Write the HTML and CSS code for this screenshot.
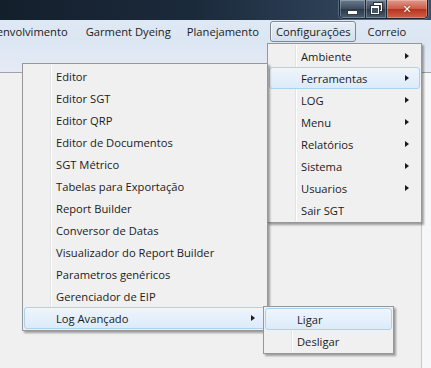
FILE: index.html
```html
<!DOCTYPE html>
<html lang="pt">
<head>
  <meta charset="UTF-8" />
  <title>SGT</title>
  <link rel="stylesheet" href="styles.css">
</head>
<body>
  <div class="janela">
    <div class="titulo">
      <div class="botoes">
        <div class="btn minimizar"><span class="traco"></span></div>
        <div class="btn restaurar"><span class="quad q1"></span><span class="quad q2"></span></div>
        <div class="btn fechar">&#x2715;</div>
      </div>
    </div>

    <div class="faixa">
      <div class="menubar">
        <div class="mb-item primeiro">Desenvolvimento</div>
        <div class="mb-item">Garment Dyeing</div>
        <div class="mb-item">Planejamento</div>
        <div class="mb-item aberto">Configurações</div>
        <div class="mb-item">Correio</div>
      </div>
    </div>

    <div class="cliente">
      <div class="moldura"></div>
    </div>

    <!-- menu Configurações -->
    <div class="menu menu-config">
      <div class="item">Ambiente<span class="seta"></span></div>
      <div class="item ativo">Ferramentas<span class="seta"></span></div>
      <div class="item">LOG<span class="seta"></span></div>
      <div class="item">Menu<span class="seta"></span></div>
      <div class="item">Relatórios<span class="seta"></span></div>
      <div class="item">Sistema<span class="seta"></span></div>
      <div class="item">Usuarios<span class="seta"></span></div>
      <div class="item">Sair SGT</div>
    </div>

    <!-- submenu Ferramentas -->
    <div class="menu menu-ferramentas">
      <div class="item">Editor</div>
      <div class="item">Editor SGT</div>
      <div class="item">Editor QRP</div>
      <div class="item">Editor de Documentos</div>
      <div class="item">SGT Métrico</div>
      <div class="item">Tabelas para Exportação</div>
      <div class="item">Report Builder</div>
      <div class="item">Conversor de Datas</div>
      <div class="item">Visualizador do Report Builder</div>
      <div class="item">Parametros genéricos</div>
      <div class="item">Gerenciador de EIP</div>
      <div class="item ativo">Log Avançado<span class="seta"></span></div>
    </div>

    <!-- submenu Log Avançado -->
    <div class="menu menu-log">
      <div class="item ativo">Ligar</div>
      <div class="item">Desligar</div>
    </div>
  </div>
</body>
</html>
```

FILE: styles.css
```css
body {
  margin: 0;
  font-family: "Open Sans", "Noto Sans", sans-serif;
  font-size: 11.2px;
  color: #1b1b1b;
  background: #f0f0f0;
}

.janela {
  position: relative;
  width: 431px;
  height: 368px;
  overflow: hidden;
  display: flex;
  flex-direction: column;
}

/* barra de titulo escura (Aero) */
.titulo {
  height: 20px;
  flex: none;
  background: linear-gradient(to right, #141f2c 0%, #1b2a3b 45%, #2c3f55 75%, #3d5064 100%);
  display: flex;
  justify-content: flex-end;
}

.botoes {
  display: flex;
  height: 18px;
  margin-right: 3px;
  border: 1px solid #1a2634;
  border-top: none;
  border-radius: 0 0 5px 5px;
  overflow: hidden;
  box-shadow: 0 0 0 1px rgba(160, 180, 200, 0.35);
}

.btn {
  height: 100%;
  display: flex;
  align-items: center;
  justify-content: center;
  position: relative;
  box-shadow: inset 0 0 0 1px rgba(255, 255, 255, 0.25);
}

.minimizar {
  width: 25px;
  background: linear-gradient(#6b7b8e, #3c4b5e 50%, #2b394a 51%, #4a5d72);
  border-right: 1px solid #1a2634;
}

.traco {
  width: 9px;
  height: 3px;
  background: #fff;
  border: 1px solid #3a3a3a;
  margin-top: 6px;
}

.restaurar {
  width: 20px;
  background: linear-gradient(#6b7b8e, #3c4b5e 50%, #2b394a 51%, #4a5d72);
  border-right: 1px solid #1a2634;
}

.quad {
  position: absolute;
  width: 6px;
  height: 5px;
  border: 1px solid #fff;
  border-top-width: 2px;
  outline: 1px solid #333;
}

.q1 { left: 8px; top: 3px; }
.q2 { left: 5px; top: 6px; background: #44556a; }

.fechar {
  width: 40px;
  background: linear-gradient(#e09a8c, #cc5a46 50%, #b8321d 51%, #d0604a);
  color: #fff;
  font-family: "DejaVu Sans", sans-serif;
  font-size: 11px;
  font-weight: bold;
  text-shadow: 0 0 2px #5a1a10;
}

/* barra de menus */
.faixa {
  height: 52px;
  flex: none;
  background: linear-gradient(#dfe8f5, #dce6f3 40%, #e5ebf5);
  border-bottom: 1px solid #a0a4aa;
}

.menubar {
  display: flex;
  height: 22px;
  align-items: center;
}

.mb-item {
  padding: 0 7px;
  height: 19px;
  line-height: 19px;
  border: 1px solid transparent;
  white-space: nowrap;
}

.mb-item.primeiro {
  margin-left: -31px;
  padding-right: 9px;
}

.mb-item.aberto {
  border-color: #7d8894;
  border-radius: 3px;
  background: linear-gradient(#e6edf6, #d5e0ee);
  box-shadow: inset 1px 1px 0 rgba(255, 255, 255, 0.6);
  padding: 0 4px 0 5px;
  margin: 0 4px 0 3px;
}

.cliente {
  flex: 1;
  display: flex;
  justify-content: flex-end;
}

.moldura {
  width: 9px;
  border-left: 1px solid #c6c8cb;
  background: #f6f7f8;
}

/* menus suspensos */
.menu {
  position: absolute;
  background: #f0f0f0;
  border: 1px solid #979797;
  padding: 1px;
  box-shadow: 2px 2px 2px rgba(0, 0, 0, 0.35);
}

.menu::before {
  content: "";
  position: absolute;
  top: 1px;
  bottom: 1px;
  left: 27px;
  width: 1px;
  background: #e2e3e3;
  border-right: 1px solid #fff;
}

.item {
  position: relative;
  height: 22px;
  display: flex;
  align-items: center;
  padding-left: 31px;
  border: 1px solid transparent;
  box-sizing: border-box;
  border-radius: 3px;
  white-space: nowrap;
}

.item.ativo {
  border-color: #a9d3ee;
  background: linear-gradient(#eef5fc, #dcebfa);
}

.seta {
  position: absolute;
  right: 10px;
  top: 7px;
  width: 0;
  height: 0;
  border-left: 4px solid #1b1b1b;
  border-top: 3.5px solid transparent;
  border-bottom: 3.5px solid transparent;
}

.menu-config {
  left: 267px;
  top: 43px;
  width: 151px;
  z-index: 1;
}

.menu-ferramentas {
  left: 22px;
  top: 63px;
  width: 242px;
  z-index: 2;
}

.menu-log {
  left: 263px;
  top: 306px;
  width: 127px;
  z-index: 3;
}
```
